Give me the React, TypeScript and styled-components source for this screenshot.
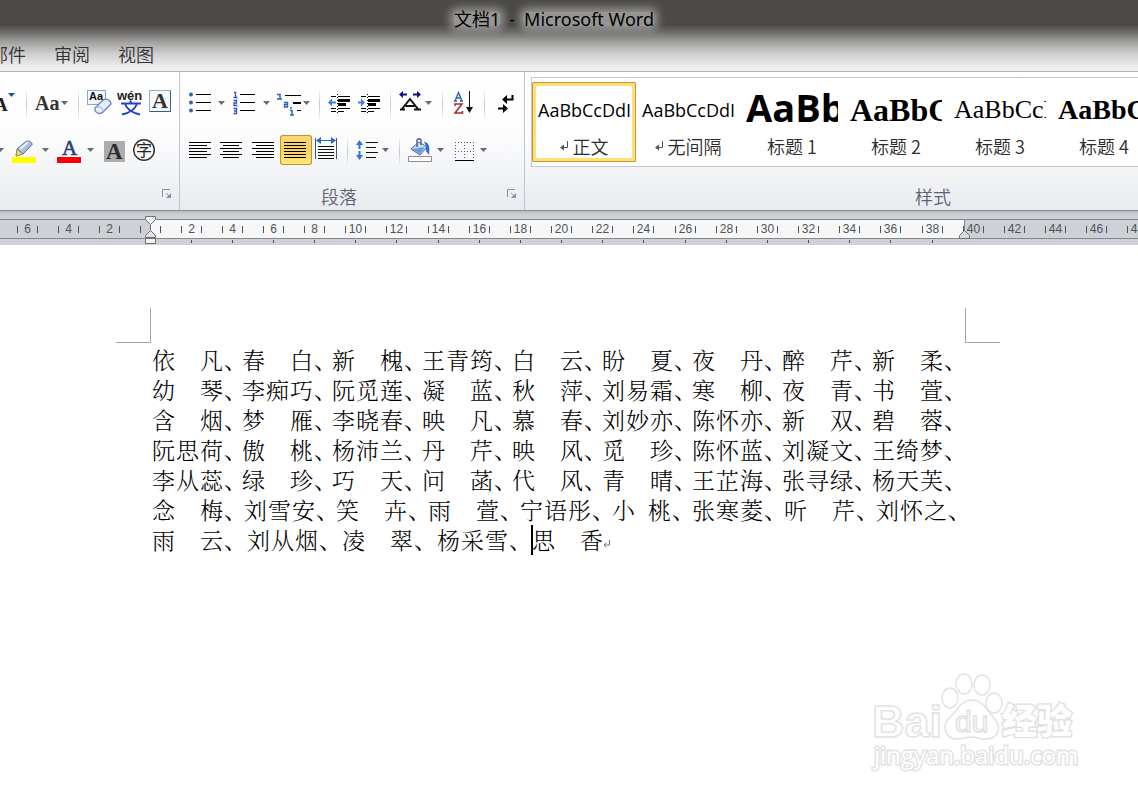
import React from "react";
import styled, { createGlobalStyle } from "styled-components";

const CJK = '"Noto Sans CJK SC", sans-serif';

const GlobalStyle = createGlobalStyle`
  * { box-sizing: border-box; }
  body {
    margin: 0;
    background: #ffffff;
    font-family: "Open Sans", ${CJK};
    overflow-x: hidden;
  }
  button {
    border: 0;
    padding: 0;
    margin: 0;
    background: none;
    font: inherit;
    color: inherit;
  }
`;

const Window = styled.div`
  position: relative;
  min-height: 100vh;
  overflow: hidden;
`;

/* ---------- title bar and tabs ---------- */

const Chrome = styled.header`
  background: linear-gradient(
    #4c4a47 0, #4c4a47 25px, #6c6b69 32px, #a2a1a0 42px, #cfcfcf 54px, #ececec 66px, #f0f0f0 71px
  );
  border-bottom: 1px solid #b0b0b0;
`;

const Title = styled.h1`
  display: flex;
  align-items: center;
  gap: 9px;
  margin: 0;
  padding-left: 454px;
  height: 37px;
  font: 400 18px/14px "Noto Sans", ${CJK};
  color: #000000;
  white-space: nowrap;
`;

const Glow = styled.span`
  height: 14px;
  border-radius: 3px;
  background: rgba(255, 255, 255, 0.42);
  box-shadow: 0 0 8px 4px rgba(255, 255, 255, 0.42);
`;

const Tabs = styled.nav`
  display: flex;
  gap: 28px;
  height: 34px;
  margin-left: -10px;
`;

const Tab = styled.button`
  font: 350 18px/34px ${CJK};
  color: #333333;
  white-space: nowrap;
`;

/* ---------- ribbon ---------- */

const Ribbon = styled.section`
  display: flex;
  height: 139px;
  background: linear-gradient(#ffffff 0, #fdfdfe 60px, #f1f3f5 105px, #e8ebf0 138px);
  border-bottom: 1px solid #85888d;
  overflow: hidden;
`;

const Group = styled.div<{ $w: number }>`
  display: flex;
  flex-direction: column;
  flex: 0 0 ${(p) => p.$w}px;
  padding-top: 16px;
  border-right: 1px solid #c2c5ca;
`;

const StylesGroup = styled(Group)`
  padding-top: 5px;
  padding-left: 6px;
`;

const ToolRow = styled.div`
  display: flex;
  flex: none;
  height: 30px;
  margin-bottom: 17px;
`;

const Tool = styled.button<{ $w: number; $pad: number; $on?: boolean }>`
  display: flex;
  align-items: center;
  flex: 0 0 ${(p) => p.$w}px;
  height: 30px;
  padding-left: ${(p) => p.$pad}px;
  overflow: hidden;
  border-radius: 3px;
  ${(p) =>
    p.$on &&
    `background: linear-gradient(#fdd878, #fbd260 50%, #ffec7c);
     box-shadow: inset 0 0 0 1px #c29130;`}
`;

const Divider = styled.span`
  flex: 0 0 1px;
  margin-top: 3px;
  height: 27px;
  background: linear-gradient(#f2f2f4, #c4c6ca 50%, #eceef0);
`;

const Caret = styled.svg<{ $gap: number }>`
  flex: none;
  margin-left: ${(p) => p.$gap}px;
`;

const GroupFooter = styled.div`
  position: relative;
  flex: none;
  margin-top: -3px;
  height: 34px;
  text-align: center;
  font: 350 18px/34px ${CJK};
  color: #5c6474;
  padding-right: 26px;
`;

const StylesFooter = styled(GroupFooter)`
  margin-top: 12px;
  padding-right: 11px;
`;

const Launcher = styled.button`
  position: absolute;
  right: 7px;
  top: 10px;
  width: 10px;
  height: 10px;
  line-height: 0;
`;

const Gallery = styled.div`
  display: flex;
  flex: none;
  height: 90px;
  padding-top: 4px;
  background: #ffffff;
  border: 1px solid #c4c7cb;
`;

const StyleCard = styled.button<{ $on?: boolean }>`
  display: flex;
  flex-direction: column;
  gap: 2px;
  flex: 0 0 104px;
  height: 80px;
  padding: 6px 6px 0;
  border-radius: 2px;
  ${(p) =>
    p.$on &&
    `box-shadow: inset 0 0 0 1px #c49234, inset 0 0 0 4px #fde07a;`}
`;

const Sample = styled.span<{ $face: string; $size: number; $bold?: boolean }>`
  flex: none;
  width: 92px;
  height: 42px;
  overflow: hidden;
  text-align: left;
  white-space: nowrap;
  color: #000000;
  font: ${(p) => (p.$bold ? 700 : 400)} ${(p) => p.$size}px / ${(p) => (p.$size > 36 ? 38 : 44)}px
    ${(p) => p.$face};
`;

const StyleName = styled.span`
  display: flex;
  justify-content: center;
  align-items: center;
  gap: 4px;
  height: 28px;
  font: 350 18px/28px ${CJK};
  color: #2c2c2c;
  white-space: nowrap;
`;

/* ---------- ruler ---------- */

const Ruler = styled.div`
  position: relative;
  height: 34px;
  padding-top: 8px;
  background: linear-gradient(#b9bcc1, #cdd0d4 4px);
  overflow: hidden;
`;

const Scale = styled.div`
  display: flex;
  height: 20px;
  padding-left: 7px;
  border-top: 1px solid #85888d;
  border-bottom: 1px solid #85888d;
  background: linear-gradient(
    to right,
    #cdd0d4 151px, #f7f7f7 151px, #f7f7f7 964px, #85888d 964px, #85888d 965px, #cdd0d4 965px
  );
`;

const Mark = styled.span<{ $w: number; $minor: boolean }>`
  position: relative;
  display: flex;
  align-items: center;
  flex: 0 0 ${(p) => p.$w}px;
  padding-left: 10px;
  font: 400 12px/18px "Liberation Sans", sans-serif;
  color: #505357;
  &::after {
    content: "";
    display: ${(p) => (p.$minor ? "block" : "none")};
    position: absolute;
    left: 20px;
    top: 20px;
    width: 1px;
    height: 3px;
    background: #505357;
  }
`;

const MarkLabel = styled.span`
  display: flex;
  align-items: center;
  justify-content: space-between;
  width: 21px;
  &::before, &::after {
    content: "";
    width: 1px;
    height: 7px;
    background: #505357;
  }
`;

const Indent = styled.svg<{ $left: number; $top: number }>`
  position: absolute;
  left: ${(p) => p.$left}px;
  top: ${(p) => p.$top}px;
`;

/* ---------- page ---------- */

const Page = styled.main`
  padding: 63px 0 0 116px;
`;

const Corners = styled.div`
  display: flex;
  gap: 814px;
`;

const Corner = styled.span<{ $side: "left" | "right" }>`
  flex: 0 0 35px;
  height: 35px;
  border-bottom: 1px solid #a6a6a6;
  border-${(p) => (p.$side === "left" ? "right" : "left")}: 1px solid #a6a6a6;
`;

const Text = styled.div`
  padding: 2px 0 0 36px;
  font: 300 23px/30px "Noto Serif CJK SC", ${CJK};
  font-feature-settings: "halt" 1;
  color: #000000;
`;

const Line = styled.p`
  display: flex;
  align-items: center;
  height: 30px;
  margin: 0;
  white-space: pre;
`;

const Name = styled.span<{ $w: number }>`
  display: flex;
  flex: none;
  width: ${(p) => p.$w}px;
`;

const Glyph = styled.span<{ $half?: boolean }>`
  flex: 0 0 ${(p) => (p.$half ? 12 : 24)}px;
`;

const Cursor = styled.span`
  width: 2px;
  height: 30px;
  margin: 0 -1px;
  background: #000000;
`;

const Watermark = styled.svg`
  position: absolute;
  left: 866px;
  top: 668px;
`;

/* ---------- icons ---------- */

const Down = ({ gap }: { gap: number }) => (
  <Caret $gap={gap} width="7" height="4" viewBox="0 0 7 4">
    <path d="M0 0h7L3.5 4z" fill="#6a6a6a" />
  </Caret>
);

const IconBox = styled.svg`
  flex: none;
`;

const Svg = ({ w, children }: { w: number; children: React.ReactNode }) => (
  <IconBox width={w} height="30" viewBox={`0 0 ${w} 30`} fill="none">
    {children}
  </IconBox>
);

const serif = '"Liberation Serif", serif';
const sans = '"Liberation Sans", sans-serif';

const Bars = ({ rows }: { rows: [number, number][] }) => (
  <Svg w={22}>
    {rows.map(([a, b], i) => (
      <path key={i} d={`M${a} ${7.5 + i * 3}H${b}`} stroke="#000" strokeWidth="1" />
    ))}
  </Svg>
);

const IndentIcon = ({ right }: { right?: boolean }) => (
  <Svg w={22}>
    <path d="M3 8.500h5M10 8.500h12M3 20.500h5M10 20.500h12M3 23.500h5M10 23.500h6" stroke="#000" />
    <path d="M10 11h12v3H10zM10 15h8v3h-8z" fill="#000" />
    <path d="M9.500 6v20" stroke="#000" strokeDasharray="1 2" />
    {right ? (
      <path d="M0 13.500h3V10.500l4 4-4 4v-3H0z" fill="#3f7fd0" />
    ) : (
      <path d="M8 13.500H4V10.500l-4 4 4 4v-3h4z" fill="#3f7fd0" />
    )}
  </Svg>
);

const ReturnIcon = () => (
  <svg width="9" height="10" viewBox="0 0 9 10" fill="none">
    <path d="M7.500 0v6.500H2" stroke="#555" />
    <path d="M0 6.500L4 3.500v6z" fill="#555" />
  </svg>
);

const EndMark = () => (
  <svg width="8" height="18" viewBox="0 0 8 18" fill="none">
    <path d="M6.500 9v5H1M3.500 11.500L1 14l2.500 2.500" stroke="#777" />
  </svg>
);

const LauncherIcon = () => (
  <Launcher aria-label="打开对话框">
    <svg width="10" height="10" viewBox="0 0 10 10" fill="none">
      <path d="M.5 8V.5H8" stroke="#8e939b" />
      <path d="M4 4l3 3" stroke="#8e939b" />
      <path d="M9 4v5H4z" fill="#8e939b" />
    </svg>
  </Launcher>
);

const FontTools = () => (
  <>
    <ToolRow>
      <Tool $w={26} $pad={0} aria-label="缩小字体">
        <Svg w={18}>
          <text x="-6" y="23" fontFamily={serif} fontWeight="700" fontSize="19" fill="#222">A</text>
          <path d="M8 5h7l-3.500 4z" fill="#1f4fae" />
        </Svg>
      </Tool>
      <Divider />
      <Tool $w={51} $pad={8} aria-label="更改大小写">
        <Svg w={25}>
          <text x="0" y="22" fontFamily={serif} fontWeight="700" fontSize="20" fill="#333">Aa</text>
        </Svg>
        <Down gap={1} />
      </Tool>
      <Divider />
      <Tool $w={35} $pad={8} aria-label="清除格式">
        <Svg w={26}>
          <rect x=".5" y="2.500" width="18" height="14" fill="#f4f8fc" stroke="#86a8c6" />
          <text x="2" y="12" fontFamily={sans} fontWeight="700" fontSize="11" fill="#111">Aa</text>
          <path d="M8 20l8-8c3-2 8 0 8 4l-8 8c-3 3-9 1-8-4z" fill="#e4edf9" stroke="#6484b8" strokeWidth="1.300" />
          <path d="M9 19c4-1 7 1 7 5" stroke="#93acd6" />
        </Svg>
      </Tool>
      <Tool $w={32} $pad={3} aria-label="拼音指南">
        <Svg w={27}>
          <text x="0" y="12" fontFamily={sans} fontWeight="700" fontSize="13" fill="#222">wén</text>
          <path d="M4 15.500h20M13 12.500l1.500 3M20 16c-2 5-7 9-15 10.500M8 16c2 5 7 9 15 10.500" stroke="#2443c8" strokeWidth="2" />
        </Svg>
      </Tool>
      <Tool $w={29} $pad={3} aria-label="字符边框">
        <Svg w={23}>
          <rect x=".5" y="2.500" width="21" height="21" fill="#f6f9fb" stroke="#8fb0c8" />
          <path d="M.5 23.500h21V3" stroke="#34608a" />
          <text x="3" y="20" fontFamily={serif} fontWeight="700" fontSize="22" fill="#333">A</text>
        </Svg>
      </Tool>
    </ToolRow>
    <ToolRow>
      <Tool $w={8} $pad={0} aria-label="下划线"><Down gap={-3} /></Tool>
      <Tool $w={46} $pad={4} aria-label="突出显示">
        <Svg w={24}>
          <path d="M0 22h24v6H0z" fill="#ffff00" />
          <path d="M5 14L14 6.500c2-1 6 0 6 3L11 19z" fill="#a9bfe4" stroke="#4c648f" />
          <path d="M8 14l8-7" stroke="#eef4fd" strokeWidth="2" />
          <path d="M5 14l6 5-7 2z" fill="#ecd98c" stroke="#8d7f48" />
        </Svg>
        <Down gap={6} />
      </Tool>
      <Tool $w={45} $pad={3} aria-label="字体颜色">
        <Svg w={24}>
          <path d="M0 22h24v6H0z" fill="#ff0000" />
          <text x="5" y="20" fontFamily={serif} fontWeight="400" fontSize="21" fill="#1f3f80" stroke="#1f3f80" strokeWidth=".6">A</text>
        </Svg>
        <Down gap={6} />
      </Tool>
      <Tool $w={30} $pad={5} aria-label="字符底纹">
        <Svg w={21}>
          <path d="M0 6h21v21H0z" fill="#acacac" />
          <text x="2" y="24" fontFamily={serif} fontWeight="700" fontSize="23" fill="#2c2c2c">A</text>
        </Svg>
      </Tool>
      <Tool $w={31} $pad={4} aria-label="带圈字符">
        <Svg w={23}>
          <circle cx="11" cy="15" r="10.300" stroke="#333" strokeWidth="1.500" />
          <text x="3" y="21" fontFamily={CJK} fontSize="16" fill="#222">字</text>
        </Svg>
      </Tool>
    </ToolRow>
  </>
);

const ParagraphTools = () => (
  <>
    <ToolRow>
      <Tool $w={49} $pad={9} aria-label="项目符号">
        <Svg w={22}>
          {[6, 14, 22].map((y) => (
            <g key={y}>
              <circle cx="2" cy={y + 0.5} r="2" fill="#2f63b4" />
              <path d={`M7 ${y + 0.5}h15`} stroke="#000" />
            </g>
          ))}
        </Svg>
        <Down gap={7} />
      </Tool>
      <Tool $w={45} $pad={4} aria-label="编号">
        <Svg w={22}>
          <path
            d="M1 4.500h1.500V9M.5 9.500h4M.5 12.500h3v2.500h-2.500v2.500h3.500M.5 20.500h3v5h-3M1 23h2.500"
            stroke="#2f55b4"
            strokeWidth="1.300"
          />
          <path d="M7 6.500h15M7 14.500h15M7 22.500h15" stroke="#000" />
        </Svg>
        <Down gap={8} />
      </Tool>
      <Tool $w={45} $pad={3} aria-label="多级列表">
        <Svg w={24}>
          <path
            d="M0 6.500h3V11M0 11h5M7 14.500h3.500V19M10.500 16.500h-3V19h3.500M13 22.500h2V27M13 27h4M14 19v2"
            stroke="#2f63b4"
            strokeWidth="1.500"
          />
          <path d="M8 7.500h16M20 22.500h4" stroke="#000" />
          <path d="M16 14h8v2h-8z" fill="#000" />
        </Svg>
        <Down gap={2} />
      </Tool>
      <Divider />
      <Tool $w={34} $pad={8} aria-label="减少缩进量"><IndentIcon /></Tool>
      <Tool $w={36} $pad={4} aria-label="增加缩进量"><IndentIcon right /></Tool>
      <Divider />
      <Tool $w={51} $pad={8} aria-label="中文版式">
        <Svg w={22}>
          <path d="M0 6.500L4 3v2.500h4v2H4V10zM22 6.500L18 3v2.500h-4v2h4V10z" fill="#0b0b8a" />
          <path d="M1 21.500h5M15 21.500h7M3 21L11 11l8 10M6.500 18h10" stroke="#111" strokeWidth="2" />
        </Svg>
        <Down gap={4} />
      </Tool>
      <Divider />
      <Tool $w={41} $pad={10} aria-label="排序">
        <Svg w={22}>
          <path d="M1 13h3M7 13h3M2 13L5.500 4.500 9 13M3.500 10h4" stroke="#2c62b4" strokeWidth="1.400" />
          <path d="M2 18v-2h7L2 25h7.500v-2" stroke="#a02c2c" strokeWidth="1.500" />
          <path d="M16.500 3v20" stroke="#111" />
          <path d="M13 19h7l-3.500 6z" fill="#111" />
        </Svg>
      </Tool>
      <Divider />
      <Tool $w={38} $pad={12} aria-label="显示编辑标记">
        <Svg w={18}>
          <path d="M15.500 7v4.500H9M1 20.500h7" stroke="#000" strokeWidth="2" />
          <path d="M5 11.500L10 7v9zM11 20.500L6 16v9z" fill="#000" />
        </Svg>
      </Tool>
    </ToolRow>
    <ToolRow>
      <Tool $w={36} $pad={9} aria-label="左对齐">
        <Bars rows={[[0, 22], [0, 18], [0, 22], [0, 18], [0, 22], [0, 18]]} />
      </Tool>
      <Tool $w={32} $pad={4} aria-label="居中">
        <Bars rows={[[0, 22], [3, 19], [0, 22], [3, 19], [0, 22], [3, 19]]} />
      </Tool>
      <Tool $w={32} $pad={4} aria-label="右对齐">
        <Bars rows={[[0, 22], [4, 22], [0, 22], [4, 22], [0, 22], [4, 22]]} />
      </Tool>
      <Tool $w={32} $pad={4} $on aria-label="两端对齐" aria-pressed="true">
        <Bars rows={[[0, 22], [0, 22], [0, 22], [0, 22], [0, 22], [0, 22]]} />
      </Tool>
      <Tool $w={35} $pad={3} aria-label="分散对齐">
        <Svg w={22}>
          <path d="M.5 3v21M21.500 3v21" stroke="#47566e" />
          <path d="M3 5.500h16" stroke="#2a68c8" strokeWidth="1" />
          <path d="M1 5.500L6 2v7zM21 5.500L16 2v7z" fill="#2a68c8" />
          <path d="M3 11.500h16M3 14.500h16M3 17.500h16M3 20.500h16M3 23.500h16" stroke="#111" />
        </Svg>
      </Tool>
      <Divider />
      <Tool $w={51} $pad={8} aria-label="行距">
        <Svg w={22}>
          <path d="M3.500 5L7 10H4.500v4h-2v-4H0zM3.500 25L7 20H4.500v-4h-2v4H0z" fill="#2e78cf" />
          <path d="M10 7.500h12M10 12.500h10M10 17.500h12M10 22.500h10" stroke="#111" />
        </Svg>
        <Down gap={4} />
      </Tool>
      <Divider />
      <Tool $w={49} $pad={8} aria-label="底纹">
        <Svg w={24}>
          <path d="M.5 21.500h23v5H.5z" fill="#fff" stroke="#8d8d8d" />
          <path d="M3 14l8-7 8 5-7 8z" fill="#c3dbf5" stroke="#44679d" />
          <path d="M4 14l13-2-5 7z" fill="#6a9be0" />
          <path d="M9 12V6c0-3 4-3 4 0v4" stroke="#59657a" strokeWidth="1.500" />
          <path d="M16 7c5 0 6 5 5 13l-3-4V11z" fill="#2c6bcb" />
        </Svg>
        <Down gap={5} />
      </Tool>
      <Tool $w={41} $pad={6} aria-label="边框">
        <Svg w={20}>
          <path d="M0 7.500h20M0 16.500h20M.5 7v18M9.500 7v18M18.500 7v18" stroke="#555" strokeDasharray="1 2" />
          <path d="M0 25.500h19" stroke="#000" />
        </Svg>
        <Down gap={5} />
      </Tool>
    </ToolRow>
  </>
);

const open = '"Open Sans", sans-serif';
const samples = [
  { text: "AaBbCcDdI", name: "正文", face: open, size: 18, mark: true, on: true },
  { text: "AaBbCcDdI", name: "无间隔", face: open, size: 18, mark: true },
  { text: "AaBbC", name: "标题 1", face: open, size: 38, bold: true },
  { text: "AaBbCc", name: "标题 2", face: serif, size: 32, bold: true },
  { text: "AaBbCcD", name: "标题 3", face: serif, size: 26 },
  { text: "AaBbCc", name: "标题 4", face: serif, size: 28, bold: true },
];

const marks = Array.from({ length: 28 }, (_, i) => (i - 3) * 2);

const lines: { step: number; names: string[] }[] = [
  { step: 90, names: ["依　凡", "春　白", "新　槐", "王青筠", "白　云", "盼　夏", "夜　丹", "醉　芹", "新　柔"] },
  { step: 90, names: ["幼　琴", "李痴巧", "阮觅莲", "凝　蓝", "秋　萍", "刘易霜", "寒　柳", "夜　青", "书　萱"] },
  { step: 90, names: ["含　烟", "梦　雁", "李晓春", "映　凡", "慕　春", "刘妙亦", "陈怀亦", "新　双", "碧　蓉"] },
  { step: 90, names: ["阮思荷", "傲　桃", "杨沛兰", "丹　芹", "映　风", "觅　珍", "陈怀蓝", "刘凝文", "王绮梦"] },
  { step: 90, names: ["李从蕊", "绿　珍", "巧　天", "问　菡", "代　风", "青　晴", "王芷海", "张寻绿", "杨天芙"] },
  { step: 92, names: ["念　梅", "刘雪安", "笑　卉", "雨　萱", "宁语彤", "小 桃", "张寒菱", "听　芹", "刘怀之"] },
  { step: 95, names: ["雨　云", "刘从烟", "凌　翠", "杨采雪"] },
];

const NameText = ({ text, step }: { text: string; step: number }) => (
  <Name $w={text.includes(" ") ? step - 12 : step}>
    {[...text].map((c, i) => (
      <Glyph key={i} $half={c === " "}>{c}</Glyph>
    ))}
    <span>、</span>
  </Name>
);

export default function App() {
  return (
    <Window>
      <GlobalStyle />
      <Chrome>
        <Title>
          <Glow>文档1</Glow>
          <span>-</span>
          <Glow>Microsoft Word</Glow>
        </Title>
        <Tabs>
          <Tab>邮件</Tab>
          <Tab>审阅</Tab>
          <Tab>视图</Tab>
        </Tabs>
      </Chrome>

      <Ribbon>
        <Group $w={180}>
          <FontTools />
          <GroupFooter><LauncherIcon /></GroupFooter>
        </Group>
        <Group $w={345}>
          <ParagraphTools />
          <GroupFooter>段落<LauncherIcon /></GroupFooter>
        </Group>
        <StylesGroup $w={822}>
          <Gallery>
            {samples.map((s) => (
              <StyleCard key={s.name} $on={s.on}>
                <Sample $face={s.face} $size={s.size} $bold={s.bold}>{s.text}</Sample>
                <StyleName>
                  {s.mark && <ReturnIcon />}
                  {s.name}
                </StyleName>
              </StyleCard>
            ))}
          </Gallery>
          <StylesFooter>样式</StylesFooter>
        </StylesGroup>
      </Ribbon>

      <Ruler>
        <Scale>
          {marks.map((m) => (
            <Mark key={m} $w={m > 0 && m < 40 && m % 12 === 0 ? 42 : 41} $minor={m > 0 && m < 40}>
              <MarkLabel>{m === 0 ? <span /> : <span>{Math.abs(m)}</span>}</MarkLabel>
            </Mark>
          ))}
        </Scale>
        <Indent $left={145} $top={5} width="11" height="29" viewBox="0 0 11 29">
          <path d="M.5.500h10v3l-5 5-5-5z" fill="#f4f4f4" stroke="#6d6f73" />
          <path d="M5.500 9v6" stroke="#6d6f73" />
          <path d="M.5 21.500v-2l5-5 5 5v2z" fill="#e4e4e4" stroke="#6d6f73" />
          <path d="M.5 22.500h10v5H.5z" fill="#f4f4f4" stroke="#6d6f73" />
        </Indent>
        <Indent $left={959} $top={19} width="11" height="9" viewBox="0 0 11 9">
          <path d="M.5 8.500v-3l5-5 5 5v3z" fill="#dcdcdc" stroke="#6d6f73" />
        </Indent>
      </Ruler>

      <Page>
        <Corners>
          <Corner $side="left" />
          <Corner $side="right" />
        </Corners>
        <Text>
          {lines.map(({ step, names }, i) => (
            <Line key={i}>
              {names.map((n) => (
                <NameText key={n} text={n} step={step} />
              ))}
              {i === lines.length - 1 && (
                <>
                  <Cursor />
                  <Name $w={71}>
                    <Glyph>思</Glyph>
                    <Glyph>　</Glyph>
                    <Glyph>香</Glyph>
                  </Name>
                  <EndMark />
                </>
              )}
            </Line>
          ))}
        </Text>
      </Page>

      <Watermark width="220" height="110" viewBox="0 0 220 110" fill="#ffffff" stroke="#e2e2e2" strokeWidth="1.500">
        <ellipse cx="84" cy="30" rx="8" ry="10" />
        <ellipse cx="98" cy="16" rx="8" ry="10" />
        <ellipse cx="116" cy="17" rx="8" ry="10" />
        <ellipse cx="128" cy="35" rx="8" ry="10" />
        <path d="M106 32c-12 0-16 13-23 18-8 9-3 21 8 21 6 0 9-2 15-2s9 3 15 2c12-1 15-12 7-21-6-6-11-18-22-18z" />
        <text x="6" y="69" fontFamily={sans} fontWeight="700" fontSize="45">Bai</text>
        <text x="89" y="64" fontFamily={sans} fontWeight="400" fontSize="30">du</text>
        <g paintOrder="stroke" strokeWidth="3">
          <text x="136" y="66" fontFamily={CJK} fontWeight="900" fontSize="35">经验</text>
          <text x="8" y="96" fontFamily={open} fontSize="24">jingyan.baidu.com</text>
        </g>
      </Watermark>
    </Window>
  );
}
